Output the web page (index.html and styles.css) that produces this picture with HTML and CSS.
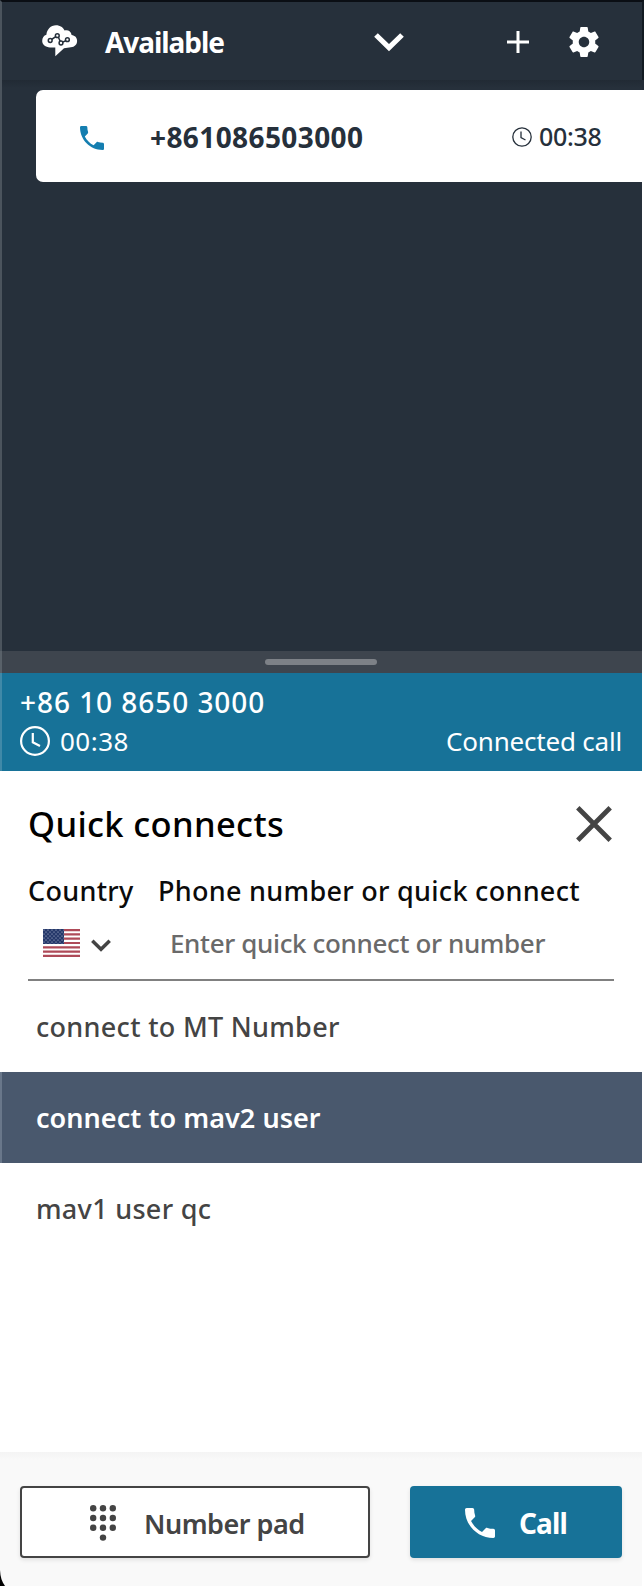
FILE: index.html
```
<!DOCTYPE html>
<html lang="en">
<head>
<meta charset="utf-8">
<title>Contact Control Panel</title>
<link rel="stylesheet" href="styles.css">
</head>
<body>
<main class="panel">
  <header class="header">
    <svg class="logo" width="36" height="32" viewBox="0 0 36 32">
      <path d="M8 22.500C3.500 22.200.200 19.600.200 16c0-3.300 1.600-5.400 4.200-6.200C4.900 4.300 8.700.200 14 .200c4.200 0 7.300 2.300 8.600 5.300 3.400-1 6.600 1 7 4.500 3.300.4 5.500 2.600 5.500 5.900 0 3.400-2.500 6-6.200 6.300L22 23.200 13.300 31.300v-8.800z" fill="#fff"/>
      <path d="M9.500 14.500 13.800 11.700M16.500 12.500 18.300 16.500M20.800 17.200 24.200 15.500" stroke="#26303b" stroke-width="1.500"/>
      <g fill="#fff" stroke="#26303b" stroke-width="1.500"><circle cx="8.200" cy="15.500" r="1.900"/><circle cx="15.300" cy="10.700" r="1.900"/><circle cx="19" cy="18" r="1.900"/><circle cx="25.400" cy="14.700" r="1.900"/></g>
    </svg>
    <span class="status">Available</span>
    <svg class="status-arrow" width="30" height="20" viewBox="0 0 30 20"><path d="M2 3 15 15.700 28 3" fill="none" stroke="#fff" stroke-width="5.200"/></svg>
    <svg class="add" width="22" height="22" viewBox="0 0 22 22"><path d="M11 0v22M0 11h22" stroke="#fff" stroke-width="3"/></svg>
    <svg class="gear" width="36" height="36" viewBox="0 0 24 24"><path fill="#fff" d="M19.430 12.980c.04-.32.07-.64.07-.98s-.03-.66-.07-.98l2.110-1.650c.19-.15.24-.42.12-.64l-2-3.460c-.12-.22-.39-.3-.61-.22l-2.490 1c-.52-.4-1.080-.73-1.690-.98l-.38-2.650C14.460 2.180 14.250 2 14 2h-4c-.25 0-.46.18-.49.42l-.38 2.650c-.61.25-1.170.59-1.690.98l-2.490-1c-.23-.09-.49 0-.61.22l-2 3.460c-.13.22-.07.49.12.64l2.110 1.650c-.04.32-.07.65-.07.98s.03.66.07.98l-2.110 1.650c-.19.15-.24.42-.12.64l2 3.460c.12.22.39.3.61.22l2.490-1c.52.4 1.080.73 1.690.98l.38 2.650c.03.24.24.42.49.42h4c.25 0 .46-.18.49-.42l.38-2.650c.61-.25 1.170-.59 1.690-.98l2.490 1c.23.09.49 0 .61-.22l2-3.460c.12-.22.07-.49-.12-.64l-2.110-1.650zM12 15.500c-1.930 0-3.500-1.570-3.500-3.500s1.570-3.500 3.500-3.500 3.500 1.570 3.500 3.500-1.570 3.500-3.500 3.500z"/></svg>
  </header>

  <section class="contacts">
    <article class="contact">
      <svg class="contact-phone" width="24" height="24" viewBox="3 3 18 18"><path fill="#147eb0" d="M6.620 10.790c1.440 2.830 3.760 5.140 6.590 6.590l2.200-2.200c.27-.27.67-.36 1.020-.24 1.120.37 2.330.57 3.570.57.55 0 1 .45 1 1V20c0 .55-.45 1-1 1C10.610 21 3 13.390 3 4c0-.55.45-1 1-1h3.500c.55 0 1 .45 1 1 0 1.250.2 2.450.57 3.570.11.35.03.74-.25 1.020l-2.200 2.200z"/></svg>
      <span class="contact-number">+861086503000</span>
      <svg class="contact-clock" width="20" height="20" viewBox="0 0 20 20" fill="none" stroke="#26303b" stroke-width="1.300"><circle cx="10" cy="10" r="9.200"/><path d="M9 4.500v6.200l4.500 2.300"/></svg>
      <span class="contact-time">00:38</span>
    </article>
  </section>

  <div class="handle"><span class="grip"></span></div>

  <section class="call-bar">
    <div class="call-number">+86 10 8650 3000</div>
    <div class="call-row">
      <svg class="call-clock" width="30" height="30" viewBox="0 0 30 30" fill="none" stroke="#fff" stroke-width="2.200"><circle cx="15" cy="15" r="13.900"/><path d="M12.800 7v9.300l7.200 3.600"/></svg>
      <span class="call-time">00:38</span>
      <span class="call-state">Connected call</span>
    </div>
  </section>

  <section class="quick">
    <div class="quick-head">
      <h1 class="title">Quick connects</h1>
      <svg class="close" width="36" height="36" viewBox="0 0 36 36"><path d="M1.800 1.800 34.200 34.200M34.200 1.800 1.800 34.200" stroke="#444" stroke-width="4.800"/></svg>
    </div>
    <div class="fields">
      <div class="country">
        <div class="label label-country">Country</div>
        <div class="country-select">
          <svg width="37" height="28" viewBox="0 0 37 28">
            <defs><pattern id="stars" width="4" height="4" patternUnits="userSpaceOnUse"><circle cx="1" cy="1" r=".6" fill="#c3cade"/><circle cx="3" cy="3" r=".6" fill="#c3cade"/></pattern></defs>
            <rect width="37" height="28" fill="#fff"/>
            <path d="M0 1.077H37M0 5.385H37M0 9.692H37M0 14H37M0 18.308H37M0 22.615H37M0 26.923H37" stroke="#ae4a58" stroke-width="2.154"/>
            <rect width="21" height="15" fill="#25386a"/><rect width="21" height="15" fill="url(#stars)"/>
          </svg>
          <svg class="country-arrow" width="20" height="13" viewBox="0 0 20 13"><path d="M1.300 1.800 10 10.300 18.700 1.800" fill="none" stroke="#444" stroke-width="3.500"/></svg>
        </div>
      </div>
      <div class="phone">
        <div class="label label-phone">Phone number or quick connect</div>
        <div class="placeholder">Enter quick connect or number</div>
      </div>
    </div>
    <ul class="list">
      <li class="item item-spaced">connect to MT Number</li>
      <li class="item selected">connect to mav2 user</li>
      <li class="item item-spaced">mav1 user qc</li>
    </ul>
  </section>

  <footer class="footer">
    <div class="button number-pad">
      <svg class="dots" width="26" height="36" viewBox="0 0 26 36" fill="#444"><circle cx="3.200" cy="3.200" r="3.200"/><circle cx="13" cy="3.200" r="3.200"/><circle cx="22.800" cy="3.200" r="3.200"/><circle cx="3.200" cy="13" r="3.200"/><circle cx="13" cy="13" r="3.200"/><circle cx="22.800" cy="13" r="3.200"/><circle cx="3.200" cy="22.800" r="3.200"/><circle cx="13" cy="22.800" r="3.200"/><circle cx="22.800" cy="22.800" r="3.200"/><circle cx="13" cy="32.600" r="3.200"/></svg>
      <span>Number pad</span>
    </div>
    <div class="button call">
      <svg width="30" height="30" viewBox="3 3 18 18"><path fill="#fff" d="M6.620 10.790c1.440 2.830 3.760 5.140 6.590 6.590l2.200-2.200c.27-.27.67-.36 1.020-.24 1.120.37 2.330.57 3.570.57.55 0 1 .45 1 1V20c0 .55-.45 1-1 1C10.610 21 3 13.390 3 4c0-.55.45-1 1-1h3.500c.55 0 1 .45 1 1 0 1.250.2 2.450.57 3.570.11.35.03.74-.25 1.020l-2.200 2.200z"/></svg>
      <span>Call</span>
    </div>
    <svg class="corner" width="5" height="16" viewBox="0 0 5 16"><path d="M0 0C.3 7 2 12 5 16H0z"/></svg>
  </footer>
</main>
</body>
</html>
```
FILE: styles.css
```
* { box-sizing: border-box; }

body {
  margin: 0;
  background: #fff;
  font-family: "Noto Sans", "Open Sans", sans-serif;
  white-space: nowrap;
}

svg { display: block; flex: none; }

.panel {
  display: flex;
  flex-direction: column;
  width: 644px;
  height: 1586px;
  padding-right: 2px;
}

.header {
  display: flex;
  align-items: center;
  height: 80px;
  margin-right: -2px;
  padding: 2px 0 0 40px;
  border-top: 2px solid #0a0e14;
  border-left: 2px solid #4b545d;
  border-right: 2px solid #121a22;
  background: #26303b;
  box-shadow: 0 10px 0 #232c37;
  color: #fff;
}

.logo { margin-top: -2px; }

.status {
  width: 269px;
  margin: -1px 0 0 27px;
  font-size: 28px;
  font-weight: 700;
  line-height: 40px;
  letter-spacing: -1.05px;
}

.add { margin-left: 103px; }
.gear { margin-left: 37px; }

.contacts {
  height: 571px;
  padding: 10px 0 0 34px;
  border-left: 2px solid #4b545d;
  background: linear-gradient(#212a34, #26303b 8px);
}

.contact {
  display: flex;
  align-items: center;
  height: 92px;
  margin-right: -2px;
  padding: 0 42px 0 44px;
  border-radius: 7px 0 0 7px;
  background: #fff;
  color: #26303b;
}

.contact-phone { margin-top: 3px; }

.contact-number {
  margin: 2px 0 0 46px;
  font-size: 28px;
  font-weight: 700;
  letter-spacing: 0.4px;
}

.contact-clock { margin: 2px 0 0 auto; }

.contact-time {
  width: 63px;
  margin: 0 0 0 7px;
  font-size: 25px;
  font-weight: 500;
  letter-spacing: -0.3px;
}

.handle {
  display: flex;
  align-items: center;
  justify-content: center;
  height: 22px;
  padding-right: 2px;
  border-left: 2px solid #596169;
  background: #3e454e;
}

.grip {
  width: 112px;
  height: 6px;
  border-radius: 3px;
  background: #7d8187;
}

.call-bar {
  height: 98px;
  padding: 9px 20px 0 18px;
  border-left: 2px solid #4089a8;
  background: #177298;
  color: #fff;
}

.call-number {
  font-size: 28px;
  font-weight: 500;
  line-height: 40px;
  letter-spacing: 0.95px;
}

.call-row {
  display: flex;
  align-items: center;
  height: 38px;
  font-size: 26px;
  letter-spacing: 0.5px;
}

.call-time { margin-left: 10px; }
.call-state { margin-left: auto; letter-spacing: -0.2px; }

.quick { height: 681px; }

.quick-head {
  display: flex;
  align-items: center;
  justify-content: space-between;
  height: 102px;
  padding: 4px 30px 0 28px;
}

.title {
  margin: -2px 0 0;
  font-size: 34.5px;
  font-weight: 500;
  letter-spacing: 0.35px;
}

.fields {
  display: flex;
  height: 108px;
  margin: 0 28px;
  border-bottom: 2px solid #808080;
}

.country { width: 130px; }

.label {
  height: 36px;
  font-size: 27px;
  font-weight: 500;
  line-height: 35px;
  letter-spacing: 0.29px;
  color: #0b0b0b;
}

.label-phone { line-height: 36px; }

.country-select {
  display: flex;
  align-items: center;
  padding: 20px 0 0 15px;
}

.country-arrow { margin: 4px 0 0 11px; }

.placeholder {
  padding: 16px 0 0 12px;
  font-size: 26px;
  font-weight: 500;
  line-height: 36px;
  letter-spacing: -0.36px;
  color: #6a6a6a;
}

.list { margin: 0; padding: 0; list-style: none; }

.item {
  height: 91px;
  padding: 0 34px;
  border-left: 2px solid transparent;
  font-size: 27px;
  font-weight: 500;
  line-height: 91px;
  color: #444;
}

.item-spaced { letter-spacing: 0.3px; }

.selected {
  border-left-color: #69778a;
  background: #49586d;
  font-weight: 600;
  letter-spacing: 0.05px;
  color: #fff;
}

.footer {
  position: relative;
  display: flex;
  gap: 40px;
  height: 134px;
  padding: 34px 20px 28px;
  background: linear-gradient(#f4f4f4, #f9f9f9 8px);
}

.button {
  display: flex;
  align-items: center;
  height: 72px;
  border-radius: 4px;
  box-shadow: 0 2px 4px rgba(0, 0, 0, 0.1);
  font-size: 27px;
  font-weight: 600;
}

.number-pad {
  gap: 28px;
  width: 350px;
  padding: 2px 0 0 68px;
  border: 2px solid #444;
  background: #fff;
  letter-spacing: -0.5px;
  color: #444;
}

.call {
  gap: 24px;
  width: 212px;
  padding: 2px 0 0 55px;
  background: #177298;
  font-size: 28px;
  font-weight: 700;
  letter-spacing: -0.9px;
  color: #fff;
}

.corner {
  position: absolute;
  left: 0;
  bottom: 0;
}
```
